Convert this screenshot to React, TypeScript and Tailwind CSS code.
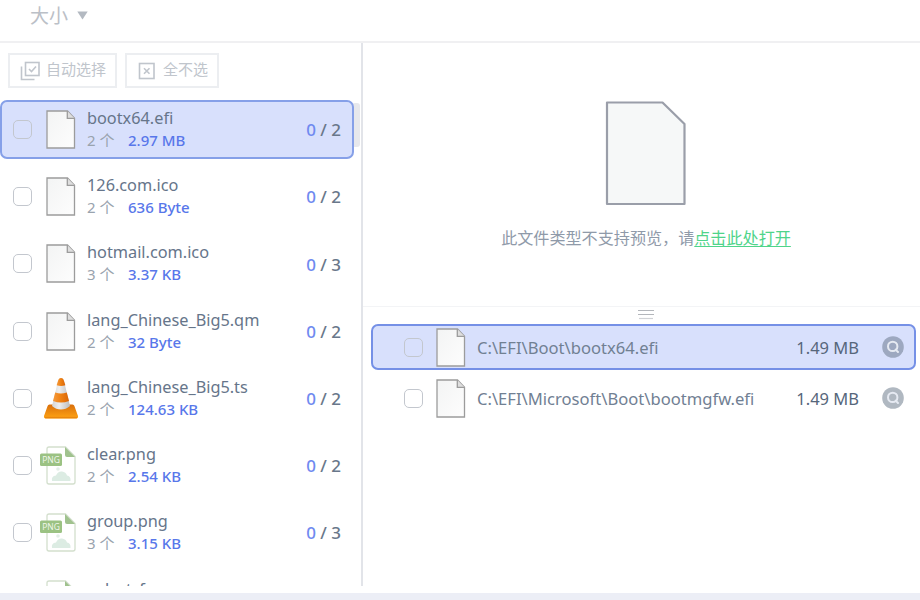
import clsx from "clsx";

const files = [
  { name: "bootx64.efi", copies: 2, size: "2.97 MB", kind: "file", active: true },
  { name: "126.com.ico", copies: 2, size: "636 Byte", kind: "file" },
  { name: "hotmail.com.ico", copies: 3, size: "3.37 KB", kind: "file" },
  { name: "lang_Chinese_Big5.qm", copies: 2, size: "32 Byte", kind: "file" },
  { name: "lang_Chinese_Big5.ts", copies: 2, size: "124.63 KB", kind: "vlc" },
  { name: "clear.png", copies: 2, size: "2.54 KB", kind: "png" },
  { name: "group.png", copies: 3, size: "3.15 KB", kind: "png" },
];

const paths = [
  { path: "C:\\EFI\\Boot\\bootx64.efi", size: "1.49 MB", active: true },
  { path: "C:\\EFI\\Microsoft\\Boot\\bootmgfw.efi", size: "1.49 MB" },
];

const FileIcon = () => (
  <svg width="30" height="39" viewBox="0 0 30 39" className="shrink-0">
    <defs>
      <linearGradient id="paper" x1="0" y1="0" x2="1" y2="1">
        <stop offset="0" stopColor="#f3f4f4" />
        <stop offset="1" stopColor="#fdfdfd" />
      </linearGradient>
    </defs>
    <path d="M1 1H21.5L28.5 8.3V38H1Z" fill="url(#paper)" stroke="#9c9c9c" strokeWidth="1.3" />
    <path d="M21.3 1V8.3H28.5" fill="#dedede" stroke="#9c9c9c" strokeWidth="1.3" />
  </svg>
);

const ConeIcon = () => (
  <svg width="36" height="42" viewBox="0 0 36 42" className="shrink-0">
    <defs>
      <linearGradient id="base" x1="0" y1="0" x2="0" y2="1">
        <stop offset="0" stopColor="#d96f0c" />
        <stop offset="1" stopColor="#ffa414" />
      </linearGradient>
      <linearGradient id="band" x1="0" y1="0" x2="1" y2="0">
        <stop offset="0" stopColor="#f59a3c" />
        <stop offset="0.5" stopColor="#ee8012" />
        <stop offset="1" stopColor="#d96508" />
      </linearGradient>
      <linearGradient id="white" x1="0" y1="0" x2="1" y2="0">
        <stop offset="0" stopColor="#d4d4d4" />
        <stop offset="0.4" stopColor="#eeeeee" />
        <stop offset="1" stopColor="#bcbcbc" />
      </linearGradient>
    </defs>
    <path
      d="M6.5 27.5H29.5Q31 27.5 31.4 29L35 39Q35.4 41.5 33 41.5H3Q.6 41.5 1 39L4.6 29Q5 27.5 6.5 27.5Z"
      fill="url(#base)"
    />
    <path d="M2 40.6H34" stroke="#e88710" strokeWidth="1.4" />
    <path d="M9 29L15 4Q15.7 1 18 1T21 4L27 29Q23 32.5 18 32.5T9 29Z" fill="url(#white)" />
    <path d="M13.6 8.2L15 4Q15.7 1 18 1T21 4L22.4 8.2Q18 9.7 13.6 8.2Z" fill="url(#band)" />
    <path d="M12.2 15.5Q18 17.5 23.8 15.5L26 24Q18 27 10 24Z" fill="url(#band)" />
  </svg>
);

const PngIcon = () => (
  <svg width="36" height="39" viewBox="0 0 36 39" className="shrink-0">
    <path
      d="M9 1H25.5L35 10.5V36Q35 38 33 38H9Q7 38 7 36V3Q7 1 9 1Z"
      fill="#fff"
      stroke="#d3dfcd"
      strokeWidth="1.3"
    />
    <path d="M25 1L35 11H27Q25 11 25 9Z" fill="#a0c28e" />
    <circle cx="18" cy="23" r="1.8" fill="#e3efe7" />
    <path d="M12 35Q11 30 16 29.5Q18 25 22 25.5T27 29.5Q31 30 30.5 35Z" fill="#dcece3" />
    <rect x="0" y="7.5" width="22" height="12.5" rx="1.5" fill="#9bc283" />
    <text x="11" y="17" textAnchor="middle" fontSize="8.5" fill="#f2f8ee" fontFamily="Open Sans, sans-serif">
      PNG
    </text>
  </svg>
);

const Checkbox = () => (
  <span className="size-[19px] shrink-0 rounded-[5px] border-[1.5px] border-[#c3c7ce]" />
);

const FindIcon = ({ active }: { active?: boolean }) => (
  <svg width="22" height="22" viewBox="0 0 22 22" className="shrink-0">
    <circle cx="11" cy="11" r="10.8" fill={active ? "#9da8c0" : "#b0b8c1"} />
    <circle cx="10.7" cy="10.4" r="4.7" fill="none" stroke="#e6eaf2" strokeWidth="2" />
    <path d="M13.6 13.6L16 16" stroke="#e6eaf2" strokeWidth="2" strokeLinecap="round" />
  </svg>
);

const FileRow = ({ file }: { file: (typeof files)[number] }) => (
  <div
    className={clsx(
      "relative flex h-[59px] w-[354px] shrink-0 items-center rounded-[7px] border-2 pr-[11px] pl-[11px]",
      file.active ? "border-[#86a0e8] bg-[#d8e0fc]" : "border-transparent"
    )}
  >
    <Checkbox />
    <div className="flex w-[55px] shrink-0 items-center justify-end pr-[11px]">
      {file.kind === "file" && <FileIcon />}
      {file.kind === "vlc" && <div className="-mr-[3px] flex"><ConeIcon /></div>}
      {file.kind === "png" && <div className="flex"><PngIcon /></div>}
    </div>
    <div className="flex-1 pb-px whitespace-nowrap">
      <div className="text-[16.3px] leading-[22px] text-[#66758a]">{file.name}</div>
      <div className="flex gap-3 text-[15px] leading-[22px]">
        <span className="flex w-[29px] gap-1 text-[#99a3ae]">
          <span>{file.copies}</span>
          <span>个</span>
        </span>
        <span className="font-medium text-[#5877ea]">{file.size}</span>
      </div>
    </div>
    <div className="pt-px text-[17px] font-medium text-[#69778a]">
      <span className="text-[#6f8af0]">0</span> / {file.copies}
    </div>
  </div>
);

export default function App() {
  return (
    <div
      className="flex h-[600px] w-[920px] flex-col overflow-hidden bg-white"
      style={{ fontFamily: '"Noto Sans", "Noto Sans CJK SC", sans-serif' }}
    >
      <header className="flex h-[43px] shrink-0 items-center gap-[9px] border-b-2 border-[#f0f0f2] pb-[10px] pl-[30px] text-[#bbc0c7]">
        <span className="text-[19px] leading-6">大小</span>
        <svg width="11" height="9" viewBox="0 0 11 9">
          <path d="M0.3 0.5H10.7L5.5 8.5Z" fill="#b3b9c1" />
        </svg>
      </header>

      <div className="flex h-[543px] shrink-0">
        <aside className="flex w-[363px] shrink-0 flex-col border-r-2 border-[#e2e4e9]">
          <div className="flex shrink-0 gap-2 pt-[10px] pb-3 pl-2 text-[15px] text-[#c0c5cc]">
            <button className="flex h-[35px] w-[109px] items-center gap-[5px] border-2 border-[#eceef1] pl-[10px]">
              <svg width="21" height="20" viewBox="0 0 21 20" fill="none" stroke="#c0c5cc" strokeWidth="1.6" className="shrink-0">
                <rect x="5.5" y="1.5" width="13.5" height="13" />
                <path d="M9 8L11.5 10.5L16 5.5M1.5 5.5V18.5H14.5" />
              </svg>
              <span className="pb-0.5 whitespace-nowrap">自动选择</span>
            </button>
            <button className="flex h-[35px] w-[94px] items-center gap-[7px] border-2 border-[#eceef1] pl-[11px]">
              <svg width="18" height="18" viewBox="0 0 18 18" fill="none" stroke="#c0c5cc" strokeWidth="1.6" className="shrink-0">
                <rect x="1.5" y="1.5" width="14.5" height="15" />
                <path d="M6 6.3L11.5 11.8M11.5 6.3L6 11.8" />
              </svg>
              <span className="pb-0.5 whitespace-nowrap">全不选</span>
            </button>
          </div>
          <div className="relative flex min-h-0 flex-1 flex-col gap-[8.2px] overflow-hidden">
            <span className="absolute top-[3px] right-px h-[44px] w-2 rounded-[3px] bg-[#e7e8ec]" />
            {files.map((file) => (
              <FileRow key={file.name} file={file} />
            ))}
            {/* next row, only its top edge scrolled into view */}
            <div className="flex h-[59px] shrink-0 pt-[10px] pl-[40px]">
              <PngIcon />
              <span className="pl-[12px] text-[16.25px] leading-[18px] text-[#66758a]">select_f</span>
            </div>
          </div>
        </aside>

        <main className="flex flex-1 flex-col">
          <section className="flex h-[264px] shrink-0 flex-col items-center border-b border-[#f3f4f6] pt-[57px] pl-[9px]">
            <svg width="82" height="106" viewBox="0 0 82 106">
              <path
                d="M2 2.5H57.5L79.5 24V104H2Z"
                fill="#f6f8f8"
                stroke="#9a9ea9"
                strokeWidth="2.2"
                strokeLinejoin="round"
              />
            </svg>
            <p className="mt-5 text-[16.1px] leading-6 whitespace-nowrap text-[#8f9aa9]">
              此文件类型不支持预览，请
              <a className="text-[#4fd48a] underline underline-offset-2">点击此处打开</a>
            </p>
          </section>
          <div className="flex h-[17px] shrink-0 items-center justify-center pb-[3px] pl-2">
            <svg width="16" height="11" viewBox="0 0 16 11">
              <path d="M0 1.5H16M0 5.5H16" stroke="#b3b6bb" strokeWidth="1.2" />
              <path d="M1 9.5H15" stroke="#cfd1d5" strokeWidth="1.2" />
            </svg>
          </div>
          <div className="flex flex-col gap-[5px] pr-1 pl-2">
            {paths.map((item) => (
              <div
                key={item.path}
                className={clsx(
                  "flex h-[46px] items-center rounded-[7px] border-2 pr-[10px] pl-[31px] text-[16.5px] whitespace-nowrap",
                  item.active ? "border-[#7590e6] bg-[#d8e0fc]" : "border-transparent"
                )}
              >
                <Checkbox />
                <div className="ml-[13px] flex"><FileIcon /></div>
                <span className="ml-[11px] flex-1 pt-[3px] text-[16.6px] text-[#718093]">{item.path}</span>
                <span className="mr-[23px] pt-[3px] text-[#56667b]">{item.size}</span>
                <FindIcon active={item.active} />
              </div>
            ))}
          </div>
        </main>
      </div>

      <footer className="mt-auto h-[7px] shrink-0 bg-[#eceef6]" />
    </div>
  );
}
